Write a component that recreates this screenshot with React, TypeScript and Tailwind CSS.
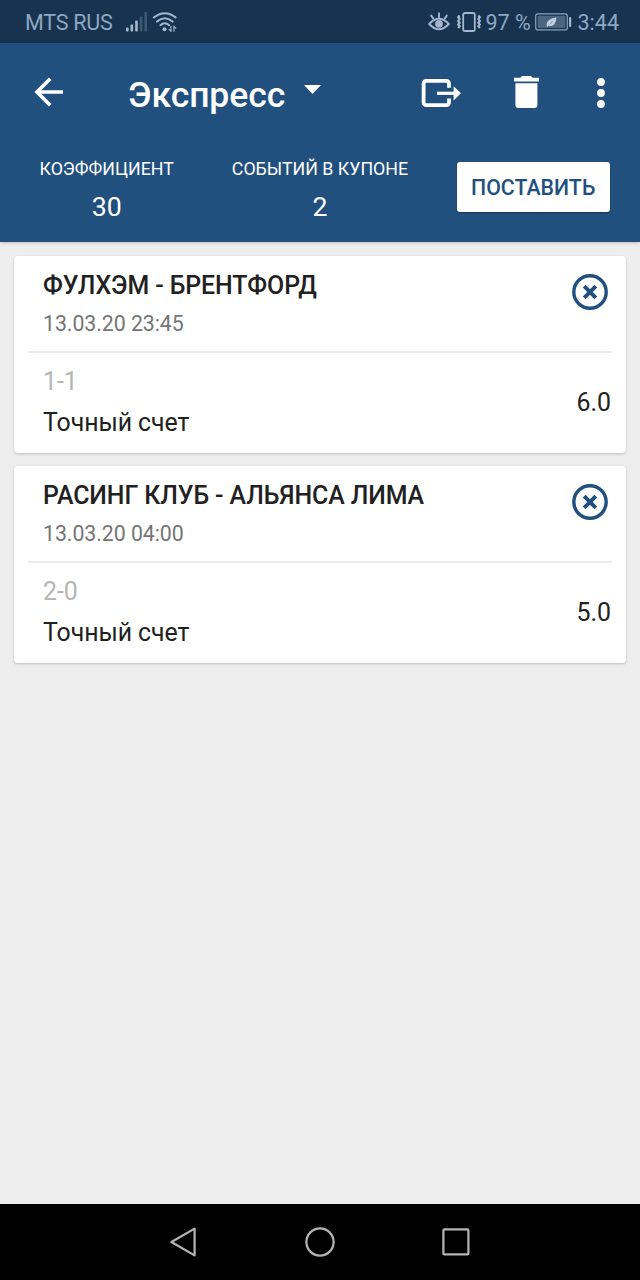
import { useState } from 'react'

type BetEvent = {
  id: number
  teams: string
  date: string
  outcome: string
  market: string
  odds: string
}

const EVENTS: BetEvent[] = [
  { id: 1, teams: 'ФУЛХЭМ - БРЕНТФОРД', date: '13.03.20 23:45', outcome: '1-1', market: 'Точный счет', odds: '6.0' },
  { id: 2, teams: 'РАСИНГ КЛУБ - АЛЬЯНСА ЛИМА', date: '13.03.20 04:00', outcome: '2-0', market: 'Точный счет', odds: '5.0' },
]

function StatusBar() {
  return (
    <div className="flex h-[43px] items-center bg-[#17334f] pl-[25px] pr-[21px] pt-px text-[21.5px] leading-none text-[#8fa7c2]">
      <span className="w-[101px] whitespace-nowrap pt-px tracking-[-0.25px]">MTS RUS</span>
      <svg className="h-5 w-[22px]" viewBox="0 0 22 20" fill="#a3b6ce">
        <rect x="0" y="15.5" width="2.6" height="4" rx="0.8" />
        <rect x="4.5" y="12.5" width="2.6" height="7" rx="0.8" />
        <rect x="9.2" y="8.5" width="2.6" height="11" rx="0.8" />
        <rect x="13.8" y="4.5" width="2.6" height="15" rx="0.8" fill="#3d5874" />
        <rect x="18.4" y="0" width="2.6" height="19.5" rx="0.8" fill="#3d5874" />
      </svg>
      <svg className="ml-[5px] h-5 w-6" viewBox="0 0 24 20" fill="none" stroke="#a3b6ce" strokeWidth="2" strokeLinecap="round">
        <path d="M1 5.4Q11.8-3 22.6 5.4" />
        <path d="M4 9.6Q11.8 3 19.6 9.6" />
        <path d="M7.4 13.2Q11.8 9.2 16.2 13.2" />
        <circle cx="11.5" cy="17.2" r="2" fill="#a3b6ce" stroke="none" />
        <path d="M18 14.4v4.8l-1.8-1.8M21 19.2v-4.8l1.8 1.8" strokeWidth="1.2" />
      </svg>
      <div className="ml-auto flex items-center">
        <svg className="h-5 w-[22px]" viewBox="0 0 22 20" fill="none" stroke="#a3b6ce" strokeWidth="1.9" strokeLinecap="round">
          <path d="M1.2 12Q11 1.5 20.8 12Q11 22.5 1.2 12Z" />
          <circle cx="11" cy="11.8" r="3.9" fill="#a3b6ce" stroke="none" />
          <path d="M11 1.2v4M3.2 3.6l2.2 3M18.8 3.6l-2.2 3" />
        </svg>
        <svg className="ml-[6px] h-5 w-[26px]" viewBox="0 0 26 20" fill="none" stroke="#a3b6ce" strokeWidth="1.8">
          <rect x="7.2" y="1" width="11.6" height="18" rx="1.8" />
          <path d="M3.6 3.5l-1.4 1.8 1.4 1.8-1.4 1.8 1.4 1.8-1.4 1.8 1.4 1.8-1.4 1.8M22.4 3.5l1.4 1.8-1.4 1.8 1.4 1.8-1.4 1.8 1.4 1.8-1.4 1.8 1.4 1.8" strokeWidth="2.2" />
        </svg>
        <span className="ml-[4px] w-[49px] whitespace-nowrap pt-px">97 %</span>
        <svg className="h-[18px] w-[37px]" viewBox="0 0 37 18" fill="none">
          <rect x="0.7" y="0.9" width="31.6" height="16" rx="2.2" stroke="#8ba0b9" strokeWidth="1.2" />
          <rect x="2.6" y="2.8" width="27.8" height="12.2" rx="0.8" fill="#4b6581" />
          <rect x="34" y="4" width="2.2" height="10" rx="1" fill="#a3b6ce" />
          <path d="M12 14.2C10.6 9 13.4 5.6 21.4 4.4 21 10 18.4 14.2 13.2 12.8Z" fill="#c4d0de" />
          <path d="M14.4 11.6L17.6 8" stroke="#4b6581" strokeWidth="0.6" />
        </svg>
        <span className="ml-[6px] whitespace-nowrap pt-px">3:44</span>
      </div>
    </div>
  )
}

function Toolbar() {
  return (
    <div className="flex h-[102px] items-center pl-[34px] pr-[35px] text-white">
      <button aria-label="Назад">
        <svg className="mb-1 h-[30px] w-[30px]" viewBox="0 0 30 30" fill="none" stroke="currentColor" strokeWidth="3.6">
          <path d="M29 15H3M16.2 1.8L3 15l13.2 13.2" />
        </svg>
      </button>
      <button className="ml-[64px] flex items-center text-[35.6px] font-medium leading-none">
        <span className="w-[159px] whitespace-nowrap pt-[3px] text-left tracking-[-0.1px]">Экспресс</span>
        <svg className="mb-2.5 ml-[17px] h-[9px] w-[17px]" viewBox="0 0 17 9" fill="currentColor">
          <path d="M0 0h17L8.5 9Z" />
        </svg>
      </button>
      <div className="mb-[3px] ml-auto flex items-center">
        <button aria-label="Экспорт">
          <svg className="h-[30px] w-10" viewBox="0 0 40 30" fill="none" stroke="currentColor" strokeWidth="3.8">
            <path d="M28 9.8V5.4a2.6 2.6 0 0 0-2.6-2.6H5.2a2.6 2.6 0 0 0-2.6 2.6v19.2a2.6 2.6 0 0 0 2.6 2.6h20.2a2.6 2.6 0 0 0 2.6-2.6v-4.2" />
            <path d="M16 15.3h18" strokeWidth="3.2" />
            <path d="M32.6 8.2l7.4 7.1-7.4 7.1Z" fill="currentColor" stroke="none" />
          </svg>
        </button>
        <button aria-label="Удалить" className="ml-[53px]">
          <svg className="mb-px h-8 w-[25px]" viewBox="0 0 25 32" fill="currentColor">
            <path d="M0 1.8h6.4L8 0h9l1.6 1.8H25v3.8H0ZM1.4 7.3h22V29a3 3 0 0 1-3 3h-16a3 3 0 0 1-3-3Z" />
          </svg>
        </button>
        <button aria-label="Меню" className="ml-[58px]">
          <svg className="h-[30px] w-2" viewBox="0 0 8 30" fill="currentColor">
            <circle cx="4" cy="4" r="3.9" />
            <circle cx="4" cy="15" r="3.9" />
            <circle cx="4" cy="26" r="3.9" />
          </svg>
        </button>
      </div>
    </div>
  )
}

function Stat({ label, value }: { label: string; value: string }) {
  return (
    <div className="flex flex-col items-center text-white">
      <span className="whitespace-nowrap text-[17.8px] leading-[24px]">{label}</span>
      <span className="mt-[9px] text-[26.7px] leading-[34px]">{value}</span>
    </div>
  )
}

function EventCard({ event, onRemove }: { event: BetEvent; onRemove: () => void }) {
  return (
    <div className="h-[196.5px] rounded-[4px] bg-white px-[14px] shadow-[0_1px_2.5px_rgba(0,0,0,0.2)]">
      <div className="flex h-[97px] justify-between border-b-2 border-[#ececec] pl-[15px] pr-1">
        <div className="pt-[15px]">
          <div className="whitespace-nowrap text-[24.9px] font-medium leading-[30px] tracking-[-0.08px] text-[#212121]">{event.teams}</div>
          <div className="mt-[9px] text-[21.3px] leading-[28px] tracking-[-0.05px] text-[#757575]">{event.date}</div>
        </div>
        <button aria-label="Убрать" className="mt-[18px] h-9 w-9 text-[#21507f]" onClick={onRemove}>
          <svg viewBox="0 0 36 36" fill="none" stroke="currentColor">
            <circle cx="18" cy="18" r="16.2" strokeWidth="3.4" />
            <path d="M12.2 12.2l11.6 11.6M23.8 12.2L12.2 23.8" strokeWidth="4" />
          </svg>
        </button>
      </div>
      <div className="flex items-center justify-between pl-[15px] pr-px pt-[14px] text-[24.9px] leading-[30px] text-[#212121]">
        <div>
          <div className="text-[#b5b5b5]">{event.outcome}</div>
          <div className="mt-[11px] tracking-[-0.08px]">{event.market}</div>
        </div>
        <div>{event.odds}</div>
      </div>
    </div>
  )
}

function NavBar() {
  return (
    <div className="flex h-[76px] items-center justify-between bg-black pl-[169px] pr-[170px]">
      <svg className="h-[30px] w-7" viewBox="0 0 28 30" fill="none" stroke="#b5b5b5" strokeWidth="2.2" strokeLinejoin="round">
        <path d="M25.6 1.6v26.8L2.4 15Z" />
      </svg>
      <svg className="h-[30px] w-[30px]" viewBox="0 0 30 30" fill="none" stroke="#b5b5b5" strokeWidth="2.2">
        <circle cx="15" cy="15" r="13.6" />
      </svg>
      <svg className="h-7 w-7" viewBox="0 0 28 28" fill="none" stroke="#b5b5b5" strokeWidth="2.2">
        <rect x="1.4" y="1.4" width="25" height="25" rx="1" />
      </svg>
    </div>
  )
}

export default function App() {
  const [events, setEvents] = useState(EVENTS)

  return (
    <div className="flex h-[1280px] w-[640px] flex-col overflow-hidden bg-[#ededed] font-['Roboto',sans-serif]">
      <StatusBar />
      <header className="h-[199px] bg-[#21507f] shadow-[0_1px_3px_rgba(0,0,0,0.2)]">
        <Toolbar />
        <div className="grid grid-cols-3 pt-3">
          <Stat label="КОЭФФИЦИЕНТ" value="30" />
          <Stat label="СОБЫТИЙ В КУПОНЕ" value={String(events.length)} />
          <button className="ml-[30px] mt-[5px] h-[50px] w-[153px] rounded-[3px] bg-white pt-[2px] text-[21.3px] font-medium text-[#21507f] shadow-[0_1px_2px_rgba(0,0,0,0.3)]">
            ПОСТАВИТЬ
          </button>
        </div>
      </header>
      <main className="flex flex-1 flex-col gap-[13.5px] px-[14px] pt-[14px]">
        {events.map((event) => (
          <EventCard
            key={event.id}
            event={event}
            onRemove={() => setEvents((prev) => prev.filter((e) => e.id !== event.id))}
          />
        ))}
      </main>
      <NavBar />
    </div>
  )
}
